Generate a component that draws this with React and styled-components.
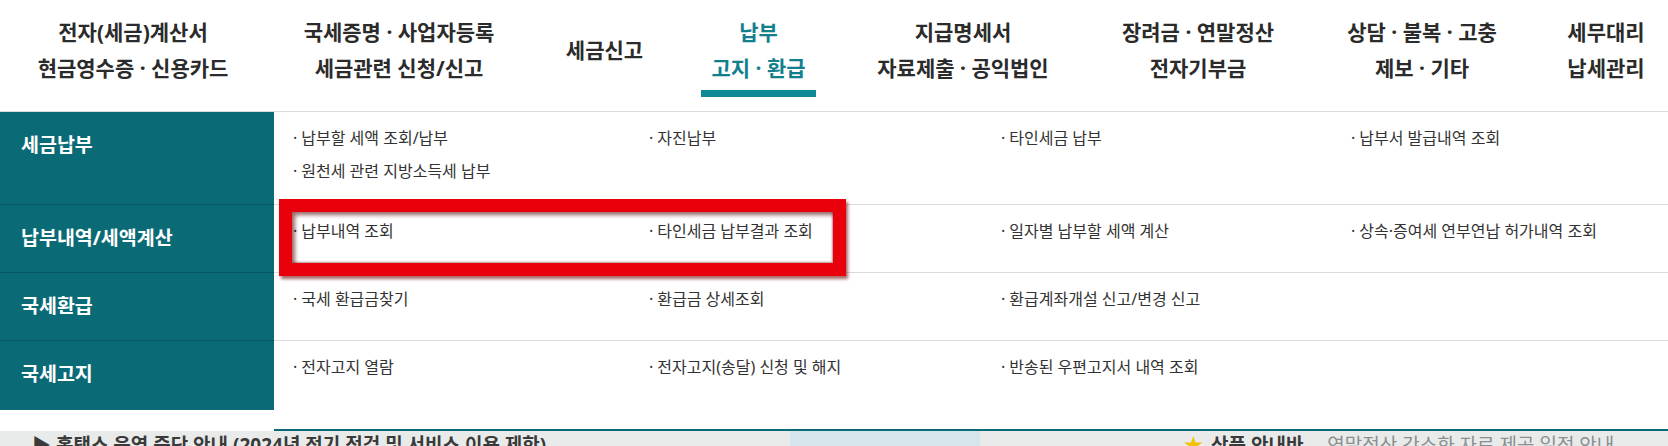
import React from 'react';
import styled, { createGlobalStyle } from 'styled-components';

const GlobalStyle = createGlobalStyle`
  html, body {
    margin: 0;
    padding: 0;
    background: #fff;
  }
  body {
    font-family: "Noto Sans", "Noto Sans CJK KR", sans-serif;
  }
`;

const TEAL = '#0a6b76';

const Page = styled.div`
  position: relative;
  width: 1668px;
  height: 446px;
  overflow: hidden;
  background: #fff;
  display: flex;
  flex-direction: column;
`;

const Nav = styled.nav`
  display: flex;
  height: 112px;
  box-sizing: border-box;
  border-bottom: 1px solid #dcdcdc;
  flex: none;
`;

const NavItem = styled.div`
  flex: none;
  width: ${(p) => p.$w}px;
  display: flex;
  flex-direction: column;
  align-items: center;
  padding-top: 14px;
  box-sizing: border-box;
`;

const NavLabel = styled.div`
  height: 72px;
  display: flex;
  align-items: center;
  justify-content: center;
  text-align: center;
  font-size: 21px;
  line-height: 36px;
  font-weight: 700;
  white-space: nowrap;
  color: ${(p) => (p.$active ? '#12808c' : '#2b2b2b')};
`;

const NavBar = styled.div`
  width: 115px;
  height: 7px;
  margin-top: 4px;
  background: ${(p) => (p.$active ? '#0e8a96' : 'transparent')};
`;

const Row = styled.div`
  display: grid;
  grid-template-columns: 274px 1fr;
  height: ${(p) => p.$h}px;
  flex: none;
  background: #fff;
`;

const Heading = styled.div`
  background: ${TEAL};
  color: #fff;
  font-size: 19.5px;
  font-weight: 700;
  line-height: 26px;
  padding: 20px 0 0 21px;
  box-sizing: border-box;
  white-space: nowrap;
  align-self: start;
  border-bottom: ${(p) => (p.$last ? 'none' : '1px solid #065660')};
  height: ${(p) => (p.$last ? '69px' : '100%')};
`;

const Cells = styled.div`
  display: grid;
  grid-template-columns: 356px 352px 350px 1fr;
  grid-auto-rows: 33px;
  align-content: start;
  padding: 10px 0 0 19px;
  box-sizing: border-box;
  background: #fff;
  border-bottom: ${(p) => (p.$last ? `2px solid ${TEAL}` : '1px solid #dcdcdc')};
`;

const Item = styled.div`
  font-size: 16px;
  line-height: 33px;
  color: #333;
  white-space: nowrap;

  &::before {
    content: '·';
    margin-right: 4px;
  }
`;

const Highlight = styled.div`
  position: absolute;
  left: 279px;
  top: 199px;
  width: 567px;
  height: 77px;
  box-sizing: border-box;
  border: 13px solid #e8000a;
  box-shadow:
    inset 3px 3px 4px rgba(80, 0, 0, 0.6),
    inset -1px -1px 2px rgba(80, 0, 0, 0.4),
    2px 3px 3px rgba(110, 0, 0, 0.6);
  pointer-events: none;
`;

const Backdrop = styled.div`
  flex: 1;
  display: flex;
  overflow: hidden;
  background: #e9ebeb;
`;

const BackNote = styled.div`
  flex: none;
  width: ${(p) => p.$w}px;
  padding: 5px 0 0 ${(p) => p.$pl || 0}px;
  box-sizing: border-box;
  font-size: 19px;
  line-height: 19px;
  font-weight: 700;
  color: #3a3a3a;
  white-space: nowrap;
  overflow: hidden;
  background: ${(p) => p.$bg || 'transparent'};
`;

const Star = styled.span`
  color: #f2c200;
  margin-right: 8px;
`;

const Faint = styled.span`
  font-weight: 400;
  color: #8a8f90;
  margin-left: 24px;
`;

const navItems = [
  { w: 266, lines: ['전자(세금)계산서', '현금영수증 · 신용카드'] },
  { w: 266, lines: ['국세증명 · 사업자등록', '세금관련 신청/신고'] },
  { w: 145, lines: ['세금신고'] },
  { w: 163, lines: ['납부', '고지 · 환급'], active: true },
  { w: 246, lines: ['지급명세서', '자료제출 · 공익법인'] },
  { w: 224, lines: ['장려금 · 연말정산', '전자기부금'] },
  { w: 224, lines: ['상담 · 불복 · 고충', '제보 · 기타'] },
  { w: 144, lines: ['세무대리', '납세관리'] },
];

const menu = [
  {
    title: '세금납부',
    h: 93,
    items: ['납부할 세액 조회/납부', '자진납부', '타인세금 납부', '납부서 발급내역 조회', '원천세 관련 지방소득세 납부'],
  },
  {
    title: '납부내역/세액계산',
    h: 68,
    items: ['납부내역 조회', '타인세금 납부결과 조회', '일자별 납부할 세액 계산', '상속·증여세 연부연납 허가내역 조회'],
  },
  {
    title: '국세환급',
    h: 68,
    items: ['국세 환급금찾기', '환급금 상세조회', '환급계좌개설 신고/변경 신고'],
  },
  {
    title: '국세고지',
    h: 90,
    items: ['전자고지 열람', '전자고지(송달) 신청 및 해지', '반송된 우편고지서 내역 조회'],
  },
];

export default function App() {
  return (
    <Page>
      <GlobalStyle />
      <Nav>
        {navItems.map((n) => (
          <NavItem key={n.lines.join()} $w={n.w}>
            <NavLabel $active={n.active}>
              {n.lines.map((l, i) => (
                <React.Fragment key={l}>
                  {i > 0 && <br />}
                  {l}
                </React.Fragment>
              ))}
            </NavLabel>
            <NavBar $active={n.active} />
          </NavItem>
        ))}
      </Nav>

      {menu.map((m, i) => {
        const last = i === menu.length - 1;
        return (
          <Row key={m.title} $h={m.h}>
            <Heading $last={last}>{m.title}</Heading>
            <Cells $last={last}>
              {m.items.map((it) => (
                <Item key={it}>{it}</Item>
              ))}
            </Cells>
          </Row>
        );
      })}

      <Backdrop>
        <BackNote $w={790} $pl={32}>▶ 홈택스 운영 중단 안내 (2024년 정기 점검 및 서비스 이용 제한)</BackNote>
        <BackNote $w={190} $bg="#d5e5eb" />
        <BackNote $w={204} />
        <BackNote $w={484}>
          <Star>★</Star>상품 안내바<Faint>연말정산 간소화 자료 제공 일정 안내</Faint>
        </BackNote>
      </Backdrop>

      <Highlight />
    </Page>
  );
}
